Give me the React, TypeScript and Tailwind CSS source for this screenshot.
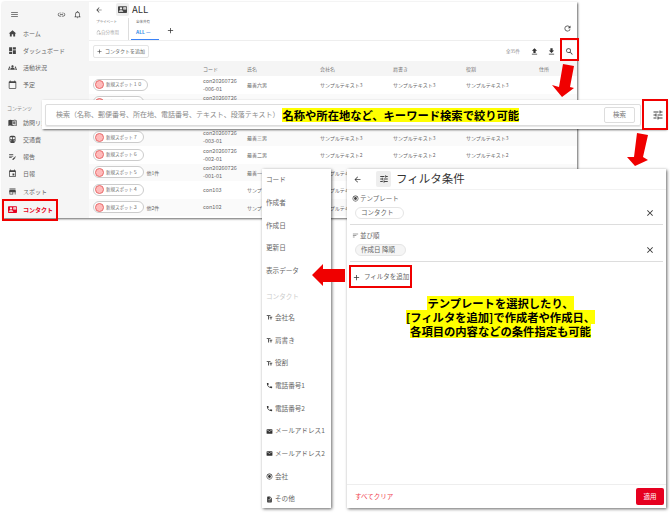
import {
  MdAdd,
  MdArrowBack,
  MdCalendarToday,
  MdClose,
  MdContactMail,
  MdDashboard,
  MdDescription,
  MdDirectionsSubway,
  MdEditNote,
  MdEmail,
  MdEvent,
  MdFileDownload,
  MdFileUpload,
  MdGroups,
  MdHome,
  MdLink,
  MdMenu,
  MdMenuBook,
  MdNotificationsNone,
  MdOutlineLockPerson,
  MdPhone,
  MdRadioButtonChecked,
  MdRefresh,
  MdSearch,
  MdSort,
  MdStore,
  MdTextFields,
  MdTune,
} from 'react-icons/md';

const font = { fontFamily: '"Noto Sans CJK JP", "Noto Sans", sans-serif' };

const navTop = [
  { icon: MdHome, label: 'ホーム' },
  { icon: MdDashboard, label: 'ダッシュボード' },
  { icon: MdGroups, label: '活動状況' },
  { icon: MdCalendarToday, label: '予定' },
];

const navContent = [
  { icon: MdMenuBook, label: '訪問リスト' },
  { icon: MdDirectionsSubway, label: '交通費' },
  { icon: MdEditNote, label: '報告' },
  { icon: MdEvent, label: '日報' },
  { icon: MdStore, label: 'スポット' },
];

const rows = [
  { spot: '新規スポット１０', more: '', code: ['con20260726', '-006-01'], name: '最善六男', text: 'サンプルテキスト3' },
  { spot: '新規スポット９', more: '', code: ['con20260726', '-005-01'], name: '最善五男', text: 'サンプルテキスト3' },
  { spot: '新規スポット８', more: '', code: ['con20260726', '-004-01'], name: '最善四男', text: 'サンプルテキスト3' },
  { spot: '新規スポット７', more: '', code: ['con20260726', '-003-01'], name: '最善三男', text: 'サンプルテキスト3' },
  { spot: '新規スポット６', more: '', code: ['con20260726', '-002-01'], name: '最善二男', text: 'サンプルテキスト2' },
  { spot: '新規スポット５', more: '他1件', code: ['con20260726', '-001-01'], name: '最善一男', text: 'サンプルテキスト1' },
  { spot: '新規スポット４', more: '', code: ['con103'], name: 'サンプル', text: 'サンプルテキスト1' },
  { spot: '新規スポット３', more: '他2件', code: ['con102'], name: 'サンプル', text: 'サンプルテキスト1' },
];

const menuPlain = ['コード', '作成者', '作成日', '更新日', '表示データ'];

const menuFields = [
  { icon: MdTextFields, label: '会社名' },
  { icon: MdTextFields, label: '肩書き' },
  { icon: MdTextFields, label: '役割' },
  { icon: MdPhone, label: '電話番号1' },
  { icon: MdPhone, label: '電話番号2' },
  { icon: MdEmail, label: 'メールアドレス1' },
  { icon: MdEmail, label: 'メールアドレス2' },
  { icon: MdRadioButtonChecked, label: '会社' },
  { icon: MdDescription, label: 'その他' },
];

function NavItem({ icon: Icon, label }: { icon: typeof MdHome; label: string }) {
  return (
    <div className="flex h-[17.6px] items-center gap-[6px] pl-[6px] text-[6px] text-[#666]">
      <Icon size={9} className="shrink-0 text-[#444]" />
      <span className="whitespace-nowrap">{label}</span>
    </div>
  );
}

function Sidebar() {
  return (
    <div className="flex w-[87px] shrink-0 flex-col bg-[#f5f5f5]">
      <div className="flex h-[23px] items-center justify-between pl-[8px] pr-[7px] pt-[3px] text-[#555]">
        <MdMenu size={9} />
        <div className="flex items-center gap-[7px]">
          <MdLink size={9} />
          <MdNotificationsNone size={9} />
        </div>
      </div>
      {navTop.map((n) => (
        <NavItem key={n.label} icon={n.icon} label={n.label} />
      ))}
      <div className="mt-[8px] h-[12px] pl-[5px] text-[5px] leading-[12px] text-[#888]">コンテンツ</div>
      {navContent.map((n) => (
        <NavItem key={n.label} icon={n.icon} label={n.label} />
      ))}
      <div className="mt-[1px] flex h-[17.6px] items-center gap-[6px] pl-[6px] text-[6px] font-bold text-[#e60020]">
        <MdContactMail size={9} className="shrink-0" />
        <span>コンタクト</span>
      </div>
    </div>
  );
}

function TableRow({ row, index }: { row: (typeof rows)[number]; index: number }) {
  return (
    <div className={`flex h-[17.5px] items-center text-[5px] text-[#666] ${index % 2 === 1 ? 'bg-[#fafafa]' : 'bg-white'}`}>
      <div className="flex w-[114px] shrink-0 items-center gap-[3px] pl-[4px]">
        <div className="flex h-[12px] items-center gap-[2px] rounded-full border border-[#ccc] bg-white pl-[1px] pr-[5px] text-[4.5px]">
          <span className="h-[9px] w-[9px] rounded-full border border-[#e86a6a] bg-[#fbb]" />
          <span className="whitespace-nowrap">{row.spot}</span>
        </div>
        {row.more && <span className="whitespace-nowrap">{row.more}</span>}
      </div>
      <div className="w-[44px] shrink-0 text-[5.5px] leading-[8px]">
        {row.code.map((c) => (
          <div key={c}>{c}</div>
        ))}
      </div>
      <div className="w-[73px] shrink-0">{row.name}</div>
      <div className="w-[73px] shrink-0 whitespace-nowrap">{row.text}</div>
      <div className="w-[73px] shrink-0 whitespace-nowrap">{row.text}</div>
      <div className="w-[73px] shrink-0 whitespace-nowrap">{row.text}</div>
    </div>
  );
}

function MainWindow() {
  return (
    <div className="absolute left-[2px] top-[2px] flex h-[216px] w-[575px] overflow-hidden bg-white shadow-[1px_1px_2px_rgba(0,0,0,0.6)]">
      <Sidebar />
      <div className="flex min-w-0 flex-1 flex-col">
        <div className="relative h-[39px] border-b border-[#eee]">
          <div className="flex h-[15px] items-center pl-[6px] text-[#444]">
            <MdArrowBack size={8} />
            <span className="ml-[13px] flex h-[13px] w-[13px] items-center justify-center rounded-[2px] bg-[#eee]">
              <MdContactMail size={9} />
            </span>
            <span className="ml-[3px] text-[9.5px] text-[#333]">ALL</span>
          </div>
          <div className="flex pl-[7px] pt-[1px]">
            <div className="w-[33px] border-r border-[#ddd]">
              <div className="text-[3.5px] leading-[8px] text-[#666]">プライベート</div>
              <div className="flex items-center text-[4.5px] leading-[12px] text-[#aaa]">
                <MdOutlineLockPerson size={5} />
                <span>自分専用</span>
              </div>
            </div>
            <div className="ml-[2px] w-[28px] border-b border-[#3b82f6] pl-[5px] pb-[1px]">
              <div className="text-[3.5px] leading-[8px] text-[#666]">全体共有</div>
              <div className="text-[5px] font-bold leading-[12px] text-[#3b8fe8]">ALL —</div>
            </div>
            <MdAdd size={9} className="ml-[7px] mt-[8px] text-[#333]" />
          </div>
          <MdRefresh size={9} className="absolute right-[5px] top-[22px] text-[#444]" />
        </div>
        <div className="flex h-[20px] items-center pl-[4px] pr-[3px]">
          <div className="flex h-[13px] w-[56px] items-center gap-[2px] rounded-[2px] border border-[#e5e5e5] pl-[2px] text-[5px] text-[#666]">
            <MdAdd size={7} className="text-[#333]" />
            <span className="whitespace-nowrap">コンタクトを追加</span>
          </div>
          <span className="ml-auto text-[4.5px] text-[#888]">全35件</span>
          <MdFileUpload size={9} className="ml-[10px] text-[#333]" />
          <MdFileDownload size={9} className="ml-[8px] text-[#333]" />
          <MdSearch size={9} className="ml-[9px] text-[#333]" />
        </div>
        <div className="flex h-[15px] items-center bg-[#f5f5f5] text-[5px] text-[#777]">
          <div className="w-[114px] shrink-0" />
          <div className="w-[44px] shrink-0">コード</div>
          <div className="w-[73px] shrink-0">氏名</div>
          <div className="w-[73px] shrink-0">会社名</div>
          <div className="w-[73px] shrink-0">肩書き</div>
          <div className="w-[73px] shrink-0">役割</div>
          <div>住所</div>
        </div>
        {rows.map((row, i) => (
          <TableRow key={row.spot} row={row} index={i} />
        ))}
      </div>
    </div>
  );
}

function SearchWindow() {
  return (
    <div className="absolute left-[42px] top-[100px] flex h-[29px] w-[624px] items-center bg-white pl-[3px] shadow-[1px_1px_2px_rgba(0,0,0,0.6)]">
      <div className="flex h-[22px] w-[596px] items-center rounded-[2px] border border-[#ddd] pl-[10px] pr-[5px] shadow-[0_1px_1px_rgba(0,0,0,0.1)]">
        <span className="whitespace-nowrap text-[7px] text-[#888]">
          検索（名称、郵便番号、所在地、電話番号、テキスト、段落テキスト）
        </span>
        <span className="ml-[3px] whitespace-nowrap bg-[#ffff00] text-[11.3px] font-bold leading-[14px] text-black">
          名称や所在地など、キーワード検索で絞り可能
        </span>
        <button className="ml-auto h-[16px] w-[31px] rounded-[2px] border border-[#ddd] text-[6.5px] text-[#777]">
          検索
        </button>
      </div>
      <MdTune size={12} className="ml-[11px] text-[#444]" />
    </div>
  );
}

function FieldMenu() {
  return (
    <div className="absolute left-[262px] top-[169px] h-[339px] w-[69px] bg-white text-[6.6px] text-[#666] shadow-[1px_1px_3px_rgba(0,0,0,0.6)]">
      {menuPlain.map((label) => (
        <div key={label} className="flex h-[22.7px] items-center pl-[4px]">
          {label}
        </div>
      ))}
      <div className="mt-[6px] flex h-[18px] items-center pl-[4px] text-[#ccc]">コンタクト</div>
      {menuFields.map((f) => (
        <div key={f.label} className="flex h-[22.7px] items-center gap-[2px] pl-[4px] whitespace-nowrap">
          <f.icon size={7} className="shrink-0 text-[#333]" />
          <span>{f.label}</span>
        </div>
      ))}
    </div>
  );
}

function FilterSection({
  icon,
  title,
  chip,
  chipClass,
  heightClass,
}: {
  icon: React.ReactNode;
  title: string;
  chip: string;
  chipClass: string;
  heightClass: string;
}) {
  return (
    <div className={`mx-[3px] flex shrink-0 items-end justify-between border-b border-[#ddd] pb-[5px] pl-[2px] pr-[8px] ${heightClass}`}>
      <div>
        <div className="flex items-center gap-[1px] text-[6.5px] leading-[10px] text-[#666]">
          {icon}
          <span>{title}</span>
        </div>
        <div
          className={`ml-[3px] mt-[4px] flex h-[12px] items-center rounded-full border border-[#e5e5e5] pl-[5px] text-[6.5px] text-[#666] ${chipClass}`}
        >
          {chip}
        </div>
      </div>
      <MdClose size={10} className="mb-[1px] text-[#333]" />
    </div>
  );
}

function FilterPanel() {
  return (
    <div className="absolute left-[347px] top-[169px] flex h-[339px] w-[319px] flex-col bg-white shadow-[1px_1px_3px_rgba(0,0,0,0.6)]">
      <div className="flex h-[21px] shrink-0 items-center border-b border-[#f2f2f2] pl-[6px]">
        <MdArrowBack size={9} className="text-[#444]" />
        <span className="ml-[14px] flex h-[16px] w-[15px] items-center justify-center rounded-[2px] bg-[#eee]">
          <MdTune size={10} className="text-[#444]" />
        </span>
        <span className="ml-[5px] text-[11.5px] leading-none text-[#333]">フィルタ条件</span>
      </div>
      <FilterSection
        icon={<MdRadioButtonChecked size={7} className="text-[#444]" />}
        title="テンプレート"
        chip="コンタクト"
        chipClass="w-[49px]"
        heightClass="h-[35px]"
      />
      <FilterSection
        icon={<MdSort size={7} className="text-[#444]" />}
        title="並び順"
        chip="作成日 降順"
        chipClass="w-[51px] border-[#ccc] bg-[#f5f5f5]"
        heightClass="h-[37px]"
      />
      <div className="flex h-[27px] shrink-0 items-center gap-[3px] pl-[5px] pt-[3px] text-[6.5px] text-[#666]">
        <MdAdd size={9} className="text-[#333]" />
        <span>フィルタを追加</span>
      </div>
      <div className="mt-[7px] flex flex-col items-center pr-[12px] text-[11.3px] font-bold leading-[14px] text-black">
        <span className="bg-[#ffff00]">テンプレートを選択したり、</span>
        <span className="bg-[#ffff00]">[フィルタを追加]で作成者や作成日、</span>
        <span className="bg-[#ffff00]">各項目の内容などの条件指定も可能</span>
      </div>
      <div className="mt-auto flex h-[24px] items-center justify-between border-t border-[#eee] pl-[8px] pr-[2px]">
        <span className="text-[6.5px] text-[#f0404f]">すべてクリア</span>
        <button className="h-[17px] w-[28px] rounded-[2px] bg-[#e60020] text-[6.5px] text-white">適用</button>
      </div>
    </div>
  );
}

// red callouts drawn over the screenshot
function Callouts() {
  return (
    <>
      <div className="absolute left-[2px] top-[199px] h-[22px] w-[56px] border-2 border-[#f00000]" />
      <div className="absolute left-[560px] top-[38px] h-[23px] w-[19px] border-2 border-[#f00000]" />
      <div className="absolute left-[642px] top-[99px] h-[31px] w-[26px] border-2 border-[#f00000]" />
      <div className="absolute left-[349px] top-[265px] h-[23px] w-[63px] border-2 border-[#f00000]" />
      <svg className="absolute left-[550px] top-[62px]" width="30" height="36" viewBox="0 0 30 36">
        <polygon points="13,2 24,4 20,25 24,26 12,35 2,23 9,25" fill="#f00000" />
      </svg>
      <svg className="absolute left-[625px] top-[131px]" width="30" height="36" viewBox="0 0 30 36">
        <polygon points="12,2 23,4 18,26 23,29 10,35 2,26 9,26" fill="#f00000" />
      </svg>
      <svg className="absolute left-[311px] top-[263px]" width="34" height="24" viewBox="0 0 34 24">
        <polygon points="1,12 12,1 12,6 34,6 34,19 12,19 12,23" fill="#f00000" />
      </svg>
    </>
  );
}

export default function App() {
  return (
    <div className="relative h-[513px] w-[670px] overflow-hidden bg-white" style={font}>
      <MainWindow />
      <SearchWindow />
      <FieldMenu />
      <FilterPanel />
      <Callouts />
    </div>
  );
}
